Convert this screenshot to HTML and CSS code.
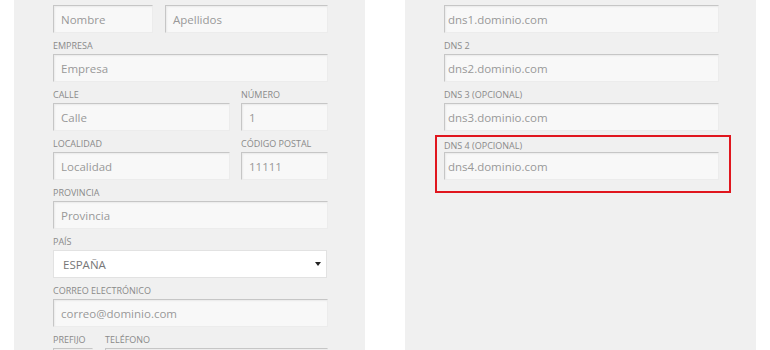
FILE: index.html
```html
<!DOCTYPE html>
<html lang="es">
<head>
<meta charset="utf-8">
<link rel="stylesheet" href="styles.css">
</head>
<body>
<div class="page">
  <div class="panel panel-left">
    <div class="row">
      <div class="field w-nombre"><div class="input">Nombre</div></div>
      <div class="field grow"><div class="input">Apellidos</div></div>
    </div>
    <div class="row">
      <div class="field grow"><div class="label">Empresa</div><div class="input">Empresa</div></div>
    </div>
    <div class="row gap-11">
      <div class="field grow"><div class="label">Calle</div><div class="input">Calle</div></div>
      <div class="field w-num"><div class="label">Número</div><div class="input">1</div></div>
    </div>
    <div class="row gap-11">
      <div class="field grow"><div class="label">Localidad</div><div class="input">Localidad</div></div>
      <div class="field w-num"><div class="label">Código postal</div><div class="input">11111</div></div>
    </div>
    <div class="row">
      <div class="field grow"><div class="label">Provincia</div><div class="input">Provincia</div></div>
    </div>
    <div class="row">
      <div class="field grow"><div class="label">País</div>
        <div class="select"><span>ESPAÑA</span><span class="caret"></span></div>
      </div>
    </div>
    <div class="row">
      <div class="field grow"><div class="label">Correo electrónico</div><div class="input">correo@dominio.com</div></div>
    </div>
    <div class="row">
      <div class="field w-pref"><div class="label">Prefijo</div><div class="input"></div></div>
      <div class="field grow"><div class="label">Teléfono</div><div class="input"></div></div>
    </div>
  </div>
  <div class="panel panel-right">
    <div class="field"><div class="input tight">dns1.dominio.com</div></div>
    <div class="field"><div class="label">DNS 2</div><div class="input tight">dns2.dominio.com</div></div>
    <div class="field"><div class="label">DNS 3 (opcional)</div><div class="input tight">dns3.dominio.com</div></div>
    <div class="field marked">
      <div class="label">DNS 4 (opcional)</div><div class="input tight">dns4.dominio.com</div>
      <div class="highlight"></div>
    </div>
  </div>
</div>
</body>
</html>
```
FILE: styles.css
```css
html, body {
  margin: 0;
  padding: 0;
  background: #ffffff;
  font-family: "Open Sans", "Liberation Sans", sans-serif;
}
.page {
  display: flex;
  gap: 40px;
  padding-left: 14px;
  height: 350px;
  overflow: hidden;
}
.panel {
  width: 351px;
  box-sizing: border-box;
  padding: 5px 37px 0 39px;
  background: #f0f0f0;
  display: flex;
  flex-direction: column;
}
.row {
  display: flex;
  gap: 12px;
}
.row.gap-11 { gap: 11px; }
.field { display: flex; flex-direction: column; position: relative; }
.grow { flex: 1; }
.w-nombre { width: 100px; }
.w-num { width: 87px; }
.w-pref { width: 40px; }
.label {
  font-size: 9px;
  line-height: 13px;
  padding-top: 6px;
  margin-bottom: 2px;
  text-transform: uppercase;
  color: #8a8a8a;
  white-space: nowrap;
}
.input {
  height: 28px;
  box-sizing: border-box;
  padding-left: 7px;
  font-size: 11.5px;
  line-height: 28px;
  color: #999999;
  background: #f8f8f8;
  border-top: 1px solid #c6c6c6;
  border-left: 1px solid #c6c6c6;
  border-right: 1px solid #ececec;
  border-bottom: 1px solid #ececec;
  box-shadow: inset 1px 1px 2px rgba(0,0,0,0.06);
  white-space: nowrap;
  overflow: hidden;
}
.input.tight { padding-left: 3px; }
.select {
  height: 28px;
  margin-right: 1px;
  box-sizing: border-box;
  padding: 0 5px 0 9px;
  background: #ffffff;
  border: 1px solid #e2e2e2;
  display: flex;
  align-items: center;
  justify-content: space-between;
  font-size: 11.5px;
  color: #777777;
}
.caret {
  width: 0;
  height: 0;
  border-left: 3.5px solid transparent;
  border-right: 3.5px solid transparent;
  border-top: 4px solid #222222;
}
.highlight {
  position: absolute;
  left: -9px;
  right: -12px;
  top: 4px;
  bottom: -13px;
  border: 2px solid #e0161e;
  pointer-events: none;
}
.marked .label { padding-top: 8px; margin-bottom: 0; }
```
